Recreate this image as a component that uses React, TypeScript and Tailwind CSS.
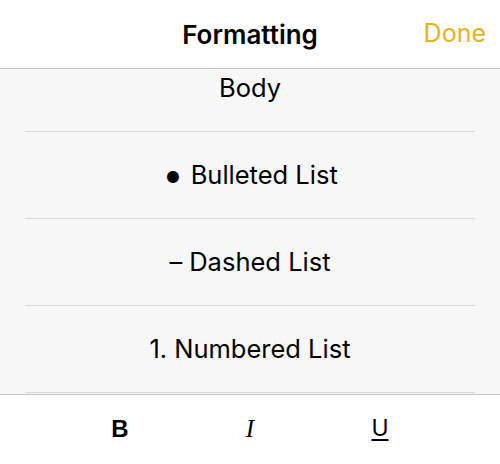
const rows = [
  { mark: "", label: "Body" },
  { mark: "•", label: "Bulleted List" },
  { mark: "–", label: "Dashed List" },
  { mark: "1.", label: "Numbered List" },
];

const App = () => {
  return (
    <div
      className="w-[500px] h-[464px] bg-white flex flex-col overflow-hidden text-black"
      style={{ fontFamily: "Inter, 'Open Sans', sans-serif" }}
    >
      <header className="h-[69px] shrink-0 border-b border-[#c4c4c4] grid grid-cols-[1fr_auto_1fr] items-center">
        <div />
        <h1 className="text-[26px] font-semibold">Formatting</h1>
        <button className="justify-self-end pr-[14px] text-[25px] text-[#e5b31c]">Done</button>
      </header>

      <div className="h-[325px] shrink-0 bg-[#f7f7f7] overflow-hidden">
        <ul className="-mt-[24px]">
          {rows.map((row, i) => (
            <li key={i} className="h-[87px] px-[25px] flex flex-col">
              <div className="flex-1 flex items-center justify-center gap-[7px] text-[25.5px]">
                {row.mark === "•" ? (
                  <span className="text-[38px] leading-none -mt-[2px]">•</span>
                ) : (
                  row.mark && <span>{row.mark}</span>
                )}
                <span>{row.label}</span>
              </div>
              <div className="h-px bg-[#d9d9d9]" />
            </li>
          ))}
        </ul>
      </div>

      <div className="flex-1 border-t border-[#c4c4c4] flex justify-center items-center pb-[2px]">
        <button className="w-[130px] text-[24px] font-bold" style={{ fontFamily: "'Liberation Sans', Arial, sans-serif" }}>
          B
        </button>
        <button className="w-[130px] text-[25px] italic" style={{ fontFamily: "'Liberation Serif', serif" }}>
          I
        </button>
        <button className="w-[130px] text-[23px] underline underline-offset-[3px]">U</button>
      </div>
    </div>
  );
};

export default App;
